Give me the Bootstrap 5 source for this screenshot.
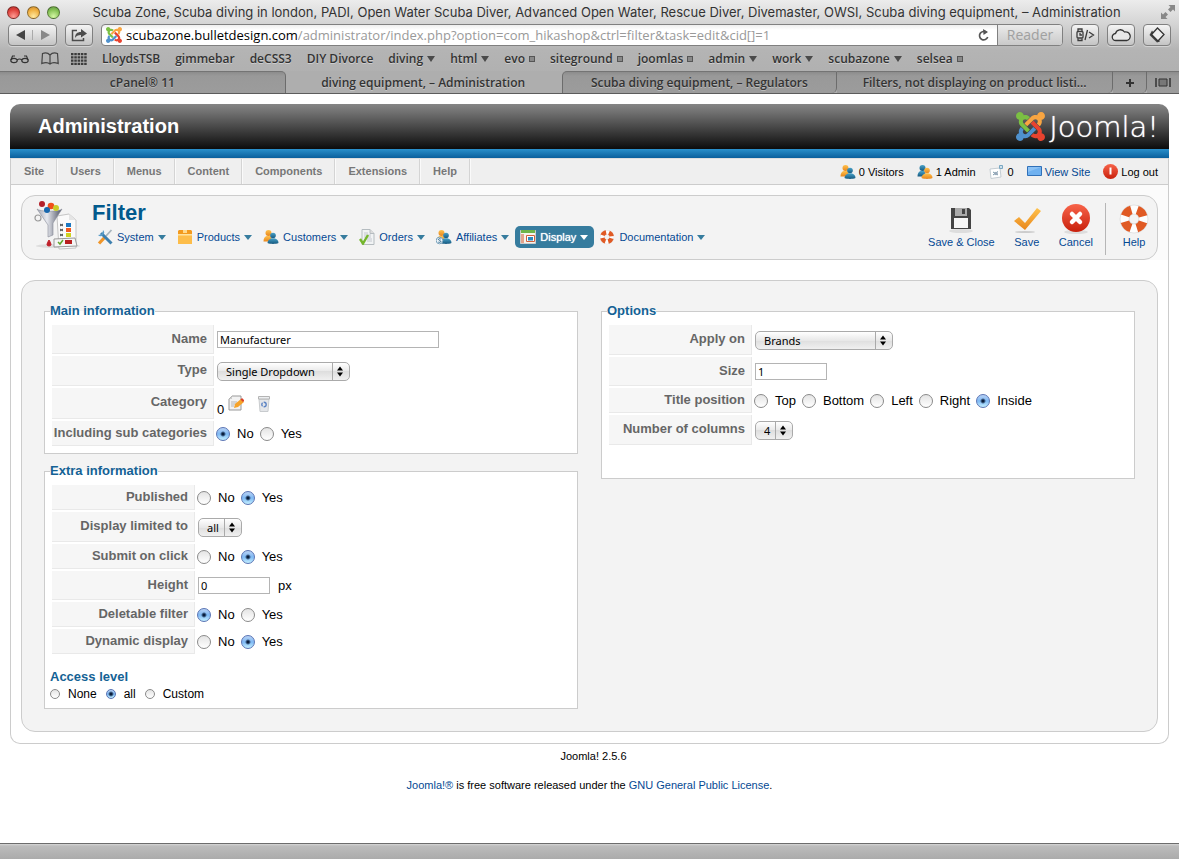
<!DOCTYPE html>
<html lang="en">
<head>
<meta charset="utf-8">
<meta name="viewport" content="width=device-width, initial-scale=1">
<title>Administration</title>
<link href="https://cdn.jsdelivr.net/npm/bootstrap@5.3.0/dist/css/bootstrap.min.css" rel="stylesheet">
<style>
:root { --ui: "Open Sans", "Noto Sans", sans-serif; --link: #054993; --line: #ccc; }
body { font: 13px/18px "Liberation Sans", Arial, sans-serif; color: #000; background: #fff; }
a { color: var(--link); text-decoration: none; }
svg { display: block; flex: none; }

/* browser window */
.chrome { background: linear-gradient(#ececec, #d4d4d4 24px, #b4b4b4 50px, #adadad); font-family: var(--ui); color: #333; }
.titlebar { height: 24px; padding: 0 4px 0 7px; font: 13px/22px Inter, sans-serif; }
.lights { display: flex; gap: 7px; }
.light { width: 13px; height: 13px; border-radius: 50%; border: 1px solid #0006; padding: 0; }
.light-red { background: radial-gradient(circle at 50% 85%, #ff9c94, #e0443e 60%, #b52d2b); }
.light-amber { background: radial-gradient(circle at 50% 85%, #ffe9a0, #f0b040 60%, #c8862c); }
.light-green { background: radial-gradient(circle at 50% 85%, #d4f7a4, #86c255 60%, #5c9440); }
.toolbar { padding: 0 8px; height: 22px; }
.tool { height: 22px; border: 1px solid #808080; border-radius: 4px; background: linear-gradient(#f4f4f4, #c4c4c4); padding: 0; display: flex; align-items: center; justify-content: center; box-shadow: 0 1px 0 #ffffff60; width: 28px; }
.tool-pair { width: 49px; }
.tool-pair button { border: 0; background: none; padding: 0; flex: 1; display: flex; justify-content: center; }
.tool-pair button + button { border-left: 1px solid #aaa; }
.address { height: 22px; border: 1px solid #808080; border-radius: 4px; background: linear-gradient(#eee, #fff 5px); font-size: 13px; line-height: 20px; color: #000; overflow: hidden; }
.address input { border: 0; padding: 0; background: none; color: #999; outline: 0; font: inherit; }
.reader { width: 65px; height: 22px; border: 0; border-left: 1px solid #808080; background: linear-gradient(#ececec, #c8c8c8); color: #a0a0a0; font-size: 14px; line-height: 18px; padding: 0; }
.bookmarks { height: 25px; padding: 0 10px; gap: 15px; font-size: 12px; font-weight: 600; white-space: nowrap; text-shadow: 0 1px 0 #ffffff60; }
.bookmarks div { display: flex; align-items: center; gap: 12px; }
.bookmarks a { color: #333; display: flex; align-items: center; gap: 4px; }
.caret-b { border: 4px solid transparent; border-top: 6px solid #4a4a4a; border-bottom: 0; }
.square-b { width: 6px; height: 6px; background: #888; border: 1px solid #555; }
.tabs { height: 23px; font-size: 12px; line-height: 21px; font-weight: 600; border-bottom: 1px solid #5c5c5c; background: #aeaeae; }
.tabs button { border: 0; padding: 0 10px; min-width: 0; background: linear-gradient(#8c8c8c, #999 4px, #9c9c9c); color: #333; font: inherit; text-shadow: 0 1px 0 #ffffff50; border-top: 1px solid #747474; border-right: 1px solid #6c6c6c; border-bottom-right-radius: 5px; flex: 1 1 22px; display: flex; align-items: center; justify-content: center; white-space: nowrap; }
.tabs .before { border-radius: 0 5px 0 0; flex-basis: 32px; }
.tabs .active { background: #aeaeae; border-color: #aeaeae; }
.tabs .after { border-left: 1px solid #6c6c6c; border-radius: 5px 0 5px 0; }
.tabs .icon-tab { flex: 0 0 34px; padding: 0; }
.tabs .icon-tab:last-child { flex-basis: 32px; border-right: 0; border-radius: 0; }
.statusbar { height: 16px; border-top: 1px solid #6c6c6c; background: linear-gradient(#d6d6d6, #bcbcbc 2px, #ababab); }

/* administrator template */
.page { padding: 10px 10px 0; }
.masthead { background: linear-gradient(#858585, #6e6e6e 20%, #0c0c0c); border-radius: 10px 10px 0 0; height: 45px; padding: 0 10px 0 28px; }
.masthead h1 { font-size: 20px; line-height: 24px; font-weight: bold; color: #fff; margin: 0 0 2px; }
.wordmark { font: 200 29px/32px "DejaVu Sans", sans-serif; color: #fff; text-shadow: 0 0 1px #fff; }
.stripe { height: 9px; background: linear-gradient(#2a90cb, #0a5f9c); }
.frame { border: 1px solid var(--line); border-top-color: #ddd; border-radius: 0 0 10px 10px; padding-bottom: 11px; }
.menubar { background: #efefef; border-bottom: 1px solid #ccc; font-size: 11px; }
.menubar nav a { color: #777; font-weight: bold; padding: 3px 12px 3px 13px; height: 25px; line-height: 18px; border-right: 1px solid #d4d4d4; box-shadow: 1px 0 0 #fafafa; }
.status { gap: 13px; padding-right: 10px; color: #000; }
.status > * { gap: 3px; display: flex; align-items: center; }
.toolwrap { background: #fbfbfb; padding: 10px 10px 0; margin-bottom: 20px; }
.toolbox { background: #f3f3f3; border: 1px solid var(--line); border-radius: 14px; height: 65px; padding: 3px 7px 0 12px; gap: 10px; }
.toolbox h2 { font-size: 22px; line-height: 24px; font-weight: bold; color: #025a8d; margin: 2px 0 1px; }
.toolbox .vr { height: 52px; }
.submenu a { height: 22px; padding: 0 6px 0 5px; gap: 4px; display: flex; align-items: center; font-size: 11px; border-radius: 5px; }
.submenu a.on { background: #367c9e; color: #fff; text-shadow: 0 0 1px #fff; }
.submenu i { border: 4px solid transparent; border-top: 5px solid #367c9e; border-bottom: 0; }
.submenu a.on i { border-top-color: #fff; }
.action { border: 0; background: none; padding: 0; color: var(--link); font-size: 11px; line-height: 14px; display: flex; flex-direction: column; align-items: center; }
.panel { background: #f3f3f3; border: 1px solid var(--line); border-radius: 14px; margin: 0 10px; padding: 21px 22px 22px; display: grid; grid-template-columns: repeat(2, minmax(0, 1fr)); column-gap: 23px; align-items: start; }
.group { background: #fff; border: 1px solid var(--line); padding: 5px 5px 7px; margin: 0 0 8px; min-width: 0; }
.group:last-child { margin-bottom: 0; }
.group > legend, .access legend { float: none; width: auto; margin: 0; font-size: 13px; line-height: 18px; font-weight: bold; color: #146295; }
.roomy { padding-bottom: 33px; }
.fields { display: grid; grid-template-columns: var(--w) 1fr; row-gap: 2px; column-gap: 3px; margin-left: 2px; }
.fields .name { background: #f6f6f6; border-right: 1px solid #e9e9e9; border-bottom: 1px solid #e9e9e9; color: #666; font-weight: bold; text-align: right; padding-right: 6px; line-height: 18px; min-height: 25px; padding-top: 3px; }
.fields .name.mid { min-height: 29px; padding-top: 5px; }
.fields .name.tall { min-height: 30px; padding-top: 5px; }
.fields .cell { display: flex; align-items: center; }
.fields .icons { min-height: 31px; }
.txt { height: 17px; border: 1px solid #b4b4b4; font: 11px/15px "Noto Sans", sans-serif; padding: 0 2px; color: #000; border-radius: 0; width: 72px; }
.wide { width: 222px; }
.pick { appearance: none; height: 19px; border: 1px solid #aaa; border-radius: 5px; font: 11px/17px "Noto Sans", sans-serif; padding: 0 0 0 8px; color: #000;
  background: url("data:image/svg+xml,%3Csvg xmlns='http://www.w3.org/2000/svg' width='17' height='17'%3E%3Cpath d='M.5 0v17' stroke='%23aaa'/%3E%3Cpath d='M5 7.500l3-4 3 4zM5 9.500l3 4 3-4z'/%3E%3C/svg%3E") right center no-repeat, linear-gradient(#fff, #e8e8e8 50%, #dedede 50%, #f0f0f0); }
.radios { gap: 4px; margin-left: -1px; }
.radios label { padding: 0 2px 0 3px; }
.radio { appearance: none; width: 14px; height: 14px; flex: none; margin: 0; border: 1px solid #8a8a8a; border-radius: 50%; background: linear-gradient(#e4e4e4, #fff); }
.radio:checked { border-color: #5a74b4; background: radial-gradient(circle, #0a1e3c 0 1px, transparent 3px), linear-gradient(#b9d2f4, #7db8f4 50%, #c4f0ff); }
.access { margin-top: 13px; }
.access legend { line-height: 20px; }
.access .radio { width: 10px; height: 10px; }
.access label { font-size: 12px; line-height: 14px; padding: 0 5px 0 4px; }
.icon-btn { border: 0; padding: 0; background: none; }
footer { font-size: 11px; line-height: 14px; text-align: center; padding-top: 5px; }
footer p { margin: 0 0 15px; }
</style>
</head>
<body class="d-flex flex-column min-vh-100">

<svg width="0" height="0" class="position-absolute" aria-hidden="true">
  <defs>
    <linearGradient id="gOrange" x2="0" y2="1"><stop stop-color="#ffc24d"/><stop offset="1" stop-color="#e8861c"/></linearGradient>
    <linearGradient id="gBlue" x2="0" y2="1"><stop stop-color="#4aa3c9"/><stop offset="1" stop-color="#15587f"/></linearGradient>
    <linearGradient id="gRed" x2="0" y2="1"><stop stop-color="#f8644a"/><stop offset="1" stop-color="#c8200c"/></linearGradient>
    <linearGradient id="gSteel"><stop stop-color="#a4a8b4"/><stop offset=".4" stop-color="#e6e8ee"/><stop offset="1" stop-color="#4c5162"/></linearGradient>
    <symbol id="joomla" viewBox="0 32 448 448">
      <path fill="#7bc043" d="M.6 92.100C.6 58.800 27.400 32 60.400 32c30 0 54.500 21.900 59.200 50.200 32.600-7.600 67.100.6 96.500 30l-44.300 44.300c-20.500-20.500-42.600-16.300-55.400-3.500-14.300 14.300-14.300 37.900 0 52.200l99.500 99.500-44 44.300c-87.700-87.200-49.700-49.700-99.800-99.700-26.800-26.500-35-64.800-24.800-98.900C20.400 144.600.6 120.700.6 92.100z"/>
      <path fill="#f9a541" d="M130.100 208.500l44.300 44.300c10-10 89.700-89.700 99.700-99.800 14.300-14.300 37.600-14.300 51.900 0 12.800 12.800 17 35-3.500 55.400l44 44.300c31.200-31.200 38.500-67.600 28.900-101.200 29.200-4.100 51.900-29.200 51.900-59.500 0-33.200-26.800-60.100-59.800-60.100-30.300 0-55.400 22.500-59.500 51.600-33.800-9.900-71.700-1.500-98.300 25.100-18.300 19.100-71.100 71.500-99.600 99.900z"/>
      <path fill="#e8432f" d="M396.400 360.700c8.200-32.700-.9-68.500-26.300-93.900-11.800-12.200 5 4.700-99.500-99.700l-44.300 44.300 99.700 99.700c14.300 14.300 14.300 37.600 0 51.900-12.800 12.800-35 17-55.400-3.500l-44 44.300c27.600 30.200 68 38.800 102.700 28 5.500 27.400 29.700 48.100 58.900 48.100 33 0 59.800-26.800 59.800-60.100 0-30.200-22.500-55-51.600-59.100z"/>
      <path fill="#4f91cd" d="M312.100 307.600l-44-44.300c-87 86.400-50.400 50.400-99.700 99.800-14.300 14.300-37.600 14.300-51.900 0-13.100-13.400-16.900-35.300 3.200-55.400l-44-44.300c-30.200 30.200-38 65.200-29.500 98.300-26.700 6-46.200 29.900-46.200 58.200C0 453.200 26.800 480 59.800 480c28.600 0 52.500-19.800 58.600-46.700 32.700 8.200 68.500-.6 94.200-26 32.100-32 12.200-12.400 99.500-99.700z"/>
    </symbol>
    <symbol id="people" viewBox="0 0 16 16">
      <circle cx="5.500" cy="4" r="3" fill="url(#gOrange)"/><path fill="url(#gOrange)" d="M.5 12.500c0-3 1-4.500 3-5.500h4l2 5.500z"/>
      <circle cx="10" cy="6.500" r="2.800" fill="url(#gBlue)"/><path fill="url(#gBlue)" d="M4.500 14c0-2.500 2-4 4-4.800h3c2.500.8 4 2.300 4 4.800-3 1.200-8 1.200-11 0z"/>
    </symbol>
    <symbol id="people2" viewBox="0 0 16 16">
      <circle cx="5.500" cy="4" r="3" fill="url(#gBlue)"/><path fill="url(#gBlue)" d="M.5 12.500c0-3 1-4.500 3-5.500h4l2 5.500z"/>
      <circle cx="10" cy="6.500" r="2.800" fill="url(#gOrange)"/><path fill="url(#gOrange)" d="M4.500 14c0-2.500 2-4 4-4.800h3c2.500.8 4 2.300 4 4.800-3 1.200-8 1.200-11 0z"/>
    </symbol>
    <symbol id="affiliate" viewBox="0 0 16 16">
      <use href="#people"/><circle cx="3.500" cy="11.500" r="3.300" fill="#eef5fa" stroke="#7aa3bd"/><path d="M4.700 10c-2.500-1-3 1-1 1.500s1.200 2.500-1.400 1.600" fill="none" stroke="#235c82" stroke-width=".9"/>
    </symbol>
    <symbol id="buoy" viewBox="0 0 32 32">
      <circle cx="16" cy="16" r="9.500" fill="none" stroke="#ccc" stroke-width="9.500"/>
      <circle cx="16" cy="16" r="9.500" fill="none" stroke="#fdfdfd" stroke-width="8.500"/>
      <circle cx="16" cy="16" r="9.500" fill="none" stroke="#e05a24" stroke-width="8.600" stroke-dasharray="8.920 6" stroke-dashoffset="-3"/>
    </symbol>
    <symbol id="funnel" viewBox="0 0 48 52">
      <ellipse cx="24" cy="47" rx="22" ry="2" fill="#ddd"/>
      <path d="M23 17l12-2 7 6v28l-17 1z" fill="#fafafa" stroke="#c5c5c5"/><path d="M35 15v6h7z" fill="#e5e5e5"/>
      <path d="M32 24h5v4h-5z" fill="#1d78c1"/><path d="M32 29h5v4h-5z" fill="#f2591f"/><path d="M32 34h5v4h-5z" fill="#cdd321"/>
      <path d="M26 25l3 2m0-2l-3 2M26 30l3 2m0-2l-3 2M26 35l3 2m0-2l-3 2" stroke="#444"/>
      <path d="M20 40l21-1 2 8-23 1z" fill="#f5f5f5" stroke="#999"/><path d="M24 43l2 2 3-4" fill="none" stroke="#5fa62a" stroke-width="1.500"/><path d="M31 41h7v4h-7z" fill="#b91f1f"/>
      <circle cx="4" cy="19" r="3" fill="none" stroke="#999" stroke-width="1.200"/>
      <path d="M3 10c3 3 22 3 25 0l-9 14v12l-5 2V26z" fill="url(#gSteel)" stroke="#888b98" stroke-width=".6"/>
      <circle cx="8" cy="5" r="3" fill="#b3202a"/><circle cx="17" cy="7" r="3.300" fill="#f0501c"/><circle cx="22" cy="9" r="3" fill="#c9cc28"/><circle cx="13" cy="11" r="3" fill="#1767ad"/>
      <path d="M15 41q4 6 0 6t0-6z" fill="#c0202a" stroke="#c0202a"/>
    </symbol>
    <symbol id="wrench" viewBox="0 0 16 16">
      <path d="M14.500 1L9 7" stroke="#a8b4bc" stroke-width="1.800"/><path d="M8.500 7.500L2 14.500" stroke="#f0962a" stroke-width="3.200"/><path d="M4 4l10.500 10.500" stroke="#3d7fae" stroke-width="3"/><path d="M6 1a3.500 3.500 0 1 1-5 5l3-.5L5.500 4z" fill="#5a9cc8"/>
    </symbol>
    <symbol id="box" viewBox="0 0 16 16"><path d="M1 2l1-1h12l1 1v3H1z" fill="#f39a1e"/><path d="M1 5h14v10H1z" fill="#fdbd4a"/><path d="M1 5h14v1.500H1z" fill="#ffe3a0"/><path d="M6 1h4v3H6z" fill="#ffd98c"/></symbol>
    <symbol id="sheet" viewBox="0 0 16 16"><path d="M3 .5h8l4 4v11H3z" fill="#f1f3f4" stroke="#b5bcc0"/><path d="M11 .5v4h4" fill="#ddd" stroke="#b5bcc0"/><path d="M5 4h4M5 6h7M5 8h7M8 10h5M8 12h5" stroke="#c4c8d0"/><path d="M1 10l3 4.500L9 6" fill="none" stroke="#74b62c" stroke-width="2.400"/></symbol>
    <symbol id="window" viewBox="0 0 16 16"><path d="M.5 1.500h15v13H.5z" fill="#f4f4ec" stroke="#ccc"/><path d="M1 1h14v3H1z" fill="#6db44a"/><path d="M1 5h3v9H1z" fill="#e3a48c"/><path d="M6.500 6.500h8v6h-8z" fill="#fff" stroke="#d0603c"/><path d="M8 8h5v3.500H8z" fill="#2a8bc0"/></symbol>
    <symbol id="mail" viewBox="0 0 16 16"><path d="M1 5l10-1 1 9-10 1.500z" fill="#fff" stroke="#c4cdd3"/><path d="M4 8l5 3m0-3.500L4 11" stroke="#7799aa"/><circle cx="7" cy="9.500" r="1.800" fill="#9ab"/><path d="M10.500 1.500h3v3h-3z" fill="#cfe0ea" stroke="#79a7c2"/></symbol>
  </defs>
</svg>

<header class="chrome">
  <div class="titlebar d-flex align-items-center">
    <div class="lights">
      <button class="light light-red" aria-label="Close"></button><button class="light light-amber" aria-label="Minimise"></button><button class="light light-green" aria-label="Zoom"></button>
    </div>
    <div class="flex-fill text-center text-nowrap overflow-hidden pe-2">Scuba Zone, Scuba diving in london, PADI, Open Water Scuba Diver, Advanced Open Water, Rescue Diver, Divemaster, OWSI, Scuba diving equipment, – Administration</div>
    <svg width="14" height="14" viewBox="0 0 14 14" fill="#888"><path d="M7.500 0H14v6.500l-2-2L9.500 7 7 4.500 9.500 2zM0 7.500l2 2L4.500 7 7 9.500 4.500 12l2 2H0z"/></svg>
  </div>
  <div class="toolbar d-flex gap-2">
    <div class="tool tool-pair">
      <button aria-label="Back"><svg width="10" height="10"><path d="M9 0v10L0 5z" fill="#444"/></svg></button>
      <button aria-label="Forward"><svg width="10" height="10"><path d="M1 0v10l9-5z" fill="#888"/></svg></button>
    </div>
    <button class="tool" aria-label="Share"><svg width="18" height="16" viewBox="0 0 18 16"><path d="M7 3.500H2.500v10h11V11" fill="none" stroke="#4c4c4c" stroke-width="1.500"/><path d="M5 11c0-4 2-6 6-6V2l6 4.500-6 4V8c-3 0-5 1-6 3z" fill="#4c4c4c"/></svg></button>
    <div class="address d-flex align-items-center flex-fill">
      <svg class="ms-1 me-1" width="16" height="16"><use href="#joomla"/></svg>
      <span>scubazone.bulletdesign.com</span>
      <input class="flex-fill" type="text" aria-label="Address" value="/administrator/index.php?option=com_hikashop&amp;ctrl=filter&amp;task=edit&amp;cid[]=1">
      <button class="icon-btn mx-2" aria-label="Reload"><svg width="11" height="13" viewBox="0 0 11 13"><path d="M8.500 3.500A4.200 4.200 0 1 0 9.700 8" fill="none" stroke="#555" stroke-width="1.700"/><path d="M5 0l5 3-4.500 3z" fill="#555"/></svg></button>
      <button class="reader">Reader</button>
    </div>
    <button class="tool" aria-label="Develop"><svg width="19" height="14" viewBox="0 0 19 14" fill="none" stroke="#3c3c3c" stroke-width="1.300"><rect x="1" y="3.500" width="6" height="6.500" rx="1"/><path d="M2 3V1h4v2M2 10.500v2h4v-2M4 5v2h2M11.500 2L9 12M13 4l4.500 3L13 10"/></svg></button>
    <button class="tool" aria-label="iCloud Tabs"><svg width="20" height="14" viewBox="0 0 20 14"><path d="M5 12.500a3.500 3.500 0 0 1-.5-7 5 5 0 0 1 9-1.500 4 4 0 0 1 2.500 8.500z" fill="#e8e8e8" stroke="#333" stroke-width="1.300"/></svg></button>
    <button class="tool" aria-label="Extension"><svg width="18" height="18" viewBox="0 0 18 18"><path d="M4 4.500L1.500 9 9 16.500l3-1" fill="#444"/><path d="M9.500 2L16 8.500 10 15 3.500 8.500z" fill="#eee" stroke="#333" stroke-width="1.300"/></svg></button>
  </div>
  <nav class="bookmarks d-flex align-items-center">
    <div>
      <button class="icon-btn" aria-label="Reading list"><svg width="19" height="12" viewBox="0 0 19 12" fill="none" stroke="#333" stroke-width="1.200"><ellipse cx="4" cy="7.500" rx="3.200" ry="2.200"/><ellipse cx="15" cy="7.500" rx="3.200" ry="2.200"/><path d="M7 7q2.500-2 5 0M1 7L2.500 3H5M18 7l-1.500-4H14"/></svg></button>
      <button class="icon-btn" aria-label="Bookmarks"><svg width="18" height="13" viewBox="0 0 18 13"><path d="M9 3Q6-.5 1.500 1.500L.8 11.500Q6 9.500 9 12q3-2.500 8.200-.5L16.500 1.500Q12-.5 9 3v9" fill="none" stroke="#444" stroke-width="1.200"/></svg></button>
      <button class="icon-btn" aria-label="Top sites"><svg width="16" height="12" viewBox="0 0 16 12"><path d="M0 1.200h16M0 4.400h16M0 7.600h16M0 10.800h16" stroke="#3c3c3c" stroke-width="2.200" stroke-dasharray="2.500 .8"/></svg></button>
    </div>
    <a href="#">LloydsTSB</a><a href="#">gimmebar</a><a href="#">deCSS3</a><a href="#">DIY Divorce</a>
    <a href="#">diving <i class="caret-b"></i></a><a href="#">html <i class="caret-b"></i></a><a href="#">evo <i class="square-b"></i></a><a href="#">siteground <i class="square-b"></i></a><a href="#">joomlas <i class="square-b"></i></a><a href="#">admin <i class="caret-b"></i></a><a href="#">work <i class="caret-b"></i></a><a href="#">scubazone <i class="caret-b"></i></a><a href="#">selsea <i class="square-b"></i></a>
  </nav>
  <div class="tabs d-flex">
    <button class="before">cPanel® 11</button>
    <button class="active">diving equipment, – Administration</button>
    <button class="after">Scuba diving equipment, – Regulators</button>
    <button>Filters, not displaying on product listi...</button>
    <button class="icon-tab" aria-label="New tab"><svg width="8" height="8"><path d="M4 0v8M0 4h8" stroke="#333" stroke-width="2"/></svg></button>
    <button class="icon-tab" aria-label="Show all tabs"><svg width="16" height="9"><path d="M1 0v9M15 0v9" stroke="#333" stroke-width="1.500"/><path d="M4 1h8v7H4z" fill="#777" stroke="#333"/></svg></button>
  </div>
</header>

<main class="page flex-fill">
  <div class="masthead d-flex align-items-center justify-content-between">
    <h1>Administration</h1>
    <div class="d-flex align-items-center gap-1"><svg width="29" height="29"><use href="#joomla"/></svg><span class="wordmark">Joomla!</span></div>
  </div>
  <div class="stripe"></div>
  <div class="frame">
    <div class="menubar d-flex justify-content-between">
      <nav class="d-flex"><a href="#">Site</a><a href="#">Users</a><a href="#">Menus</a><a href="#">Content</a><a href="#">Components</a><a href="#">Extensions</a><a href="#">Help</a></nav>
      <div class="status d-flex">
        <span><svg width="16" height="16"><use href="#people"/></svg>0 Visitors</span>
        <span><svg width="16" height="16"><use href="#people2"/></svg>1 Admin</span>
        <span><svg width="16" height="16"><use href="#mail"/></svg>0</span>
        <a href="#"><svg width="15" height="11"><path d="M.5.5h14v9H.5z" fill="#6fb1f0" stroke="#3070b8"/><path d="M1 1h13L1 6z" fill="#8cc2f5"/></svg>View Site</a>
        <a href="#" class="text-black"><svg width="15" height="15"><circle cx="7.500" cy="7.500" r="7.500" fill="url(#gRed)"/><path d="M7.500 3.500v7" stroke="#fff" stroke-width="2"/></svg>Log out</a>
      </div>
    </div>
    <div class="toolwrap">
      <div class="toolbox d-flex">
        <svg width="48" height="52"><use href="#funnel"/></svg>
        <div class="flex-fill">
          <h2>Filter</h2>
          <nav class="submenu d-flex">
            <a href="#"><svg width="16" height="16"><use href="#wrench"/></svg>System<i></i></a>
            <a href="#"><svg width="16" height="16"><use href="#box"/></svg>Products<i></i></a>
            <a href="#"><svg width="16" height="16"><use href="#people"/></svg>Customers<i></i></a>
            <a href="#"><svg width="16" height="16"><use href="#sheet"/></svg>Orders<i></i></a>
            <a href="#"><svg width="16" height="16"><use href="#affiliate"/></svg>Affiliates<i></i></a>
            <a href="#" class="on"><svg width="16" height="16"><use href="#window"/></svg>Display<i></i></a>
            <a href="#"><svg width="16" height="16"><use href="#buoy"/></svg>Documentation<i></i></a>
          </nav>
        </div>
        <div class="d-flex align-items-start pt-1">
          <button class="action me-3"><svg width="32" height="32" viewBox="0 0 32 32"><ellipse cx="16" cy="28" rx="12" ry="2" fill="#ddd"/><path d="M6 5h18l2 2v19H6z" fill="#444"/><path d="M10 5h12v8H10z" fill="#aaa"/><path d="M17 6h3v5h-3z" fill="#444"/><path d="M9 15h14v10H9z" fill="#f6f6f6"/></svg>Save &amp; Close</button>
          <button class="action me-3"><svg width="32" height="32" viewBox="0 0 32 32"><ellipse cx="14" cy="29" rx="10" ry="1" fill="#ccc"/><path d="M3 18l5-4 6 6L26 5l4 3-16 19z" fill="url(#gOrange)"/></svg>Save</button>
          <button class="action me-2"><svg width="32" height="32" viewBox="0 0 32 32"><ellipse cx="16" cy="29" rx="12" ry="2" fill="#ddd"/><circle cx="16" cy="15" r="14" fill="url(#gRed)"/><path d="M12 11l8 8m0-8l-8 8" stroke="#fff" stroke-width="4.500" stroke-linecap="round"/></svg>Cancel</button>
          <div class="vr ms-1 me-2"></div>
          <button class="action ms-1"><svg width="32" height="32"><use href="#buoy"/></svg>Help</button>
        </div>
      </div>
    </div>

    <form class="panel">
      <div>
        <fieldset class="group">
          <legend>Main information</legend>
          <div class="fields" style="--w:162px">
            <label class="name mid" for="fName">Name</label><div class="cell"><input class="txt wide" id="fName" type="text" value="Manufacturer"></div>
            <label class="name tall" for="fType">Type</label><div class="cell"><select class="pick" id="fType" style="width:133px"><option>Single Dropdown</option></select></div>
            <div class="name tall">Category</div>
            <div class="cell icons gap-1"><span class="align-self-end">0</span>
              <button type="button" class="icon-btn me-2" aria-label="Edit category"><svg width="16" height="17" viewBox="0 0 16 17"><path d="M1 4l3-3h9v14H1z" fill="#f2f2f2" stroke="#999"/><path d="M1 4h3V1z" fill="#ccc"/><path d="M3 7h6M3 9h5M3 11h3" stroke="#b5b5b5"/><path d="M6 13l1-4 6-5 3 3-6 5z" fill="#f6a32a"/><path d="M12.500 4.500L14 3l2.500 2.500L15 7z" fill="#d9412b"/></svg></button>
              <button type="button" class="icon-btn" aria-label="Clear category"><svg width="16" height="16" viewBox="0 0 16 16"><path d="M3 3h10l-1 12.500H4z" fill="#e4e6e9" stroke="#c8cbce"/><path d="M2.500.5h11v2.500h-11z" fill="#eceef0" stroke="#b4b4b4"/><circle cx="8" cy="8.500" r="2.200" fill="none" stroke="#5d84c4" stroke-width="1.400" stroke-dasharray="3.500 1"/></svg></button>
            </div>
            <div class="name">Including sub categories</div>
            <div class="cell radios"><input class="radio" type="radio" name="sub" id="s0" checked><label for="s0">No</label><input class="radio" type="radio" name="sub" id="s1"><label for="s1">Yes</label></div>
          </div>
        </fieldset>

        <fieldset class="group">
          <legend>Extra information</legend>
          <div class="fields" style="--w:143px">
            <div class="name">Published</div>
            <div class="cell radios"><input class="radio" type="radio" name="pub" id="p0"><label for="p0">No</label><input class="radio" type="radio" name="pub" id="p1" checked><label for="p1">Yes</label></div>
            <label class="name tall" for="fLimit">Display limited to</label><div class="cell"><select class="pick" id="fLimit" style="width:44px"><option>all</option></select></div>
            <div class="name">Submit on click</div>
            <div class="cell radios"><input class="radio" type="radio" name="click" id="c0"><label for="c0">No</label><input class="radio" type="radio" name="click" id="c1" checked><label for="c1">Yes</label></div>
            <label class="name mid" for="fHeight">Height</label><div class="cell gap-2"><input class="txt" id="fHeight" type="text" value="0"><span>px</span></div>
            <div class="name">Deletable filter</div>
            <div class="cell radios"><input class="radio" type="radio" name="del" id="d0" checked><label for="d0">No</label><input class="radio" type="radio" name="del" id="d1"><label for="d1">Yes</label></div>
            <div class="name">Dynamic display</div>
            <div class="cell radios"><input class="radio" type="radio" name="dyn" id="y0"><label for="y0">No</label><input class="radio" type="radio" name="dyn" id="y1" checked><label for="y1">Yes</label></div>
          </div>
          <fieldset class="access">
            <legend>Access level</legend>
            <div class="d-flex align-items-center gap-1"><input class="radio" type="radio" name="acc" id="a0"><label for="a0">None</label><input class="radio" type="radio" name="acc" id="a1" checked><label for="a1">all</label><input class="radio" type="radio" name="acc" id="a2"><label for="a2">Custom</label></div>
          </fieldset>
        </fieldset>
      </div>

      <fieldset class="group roomy">
        <legend>Options</legend>
        <div class="fields" style="--w:143px">
          <label class="name tall" for="fApply">Apply on</label><div class="cell"><select class="pick" id="fApply" style="width:138px"><option>Brands</option></select></div>
          <label class="name mid" for="fSize">Size</label><div class="cell"><input class="txt" id="fSize" type="text" value="1"></div>
          <div class="name">Title position</div>
          <div class="cell radios"><input class="radio" type="radio" name="pos" id="t0"><label for="t0">Top</label><input class="radio" type="radio" name="pos" id="t1"><label for="t1">Bottom</label><input class="radio" type="radio" name="pos" id="t2"><label for="t2">Left</label><input class="radio" type="radio" name="pos" id="t3"><label for="t3">Right</label><input class="radio" type="radio" name="pos" id="t4" checked><label for="t4">Inside</label></div>
          <label class="name tall" for="fCols">Number of columns</label><div class="cell"><select class="pick" id="fCols" style="width:38px"><option>4</option></select></div>
        </div>
      </fieldset>
    </form>
  </div>
  <footer>
    <p class="ps-2">Joomla! 2.5.6</p>
    <p><a href="#">Joomla!®</a> is free software released under the <a href="#">GNU General Public License</a>.</p>
  </footer>
</main>
<div class="statusbar"></div>

<script src="https://cdn.jsdelivr.net/npm/bootstrap@5.3.0/dist/js/bootstrap.bundle.min.js"></script>
</body>
</html>
